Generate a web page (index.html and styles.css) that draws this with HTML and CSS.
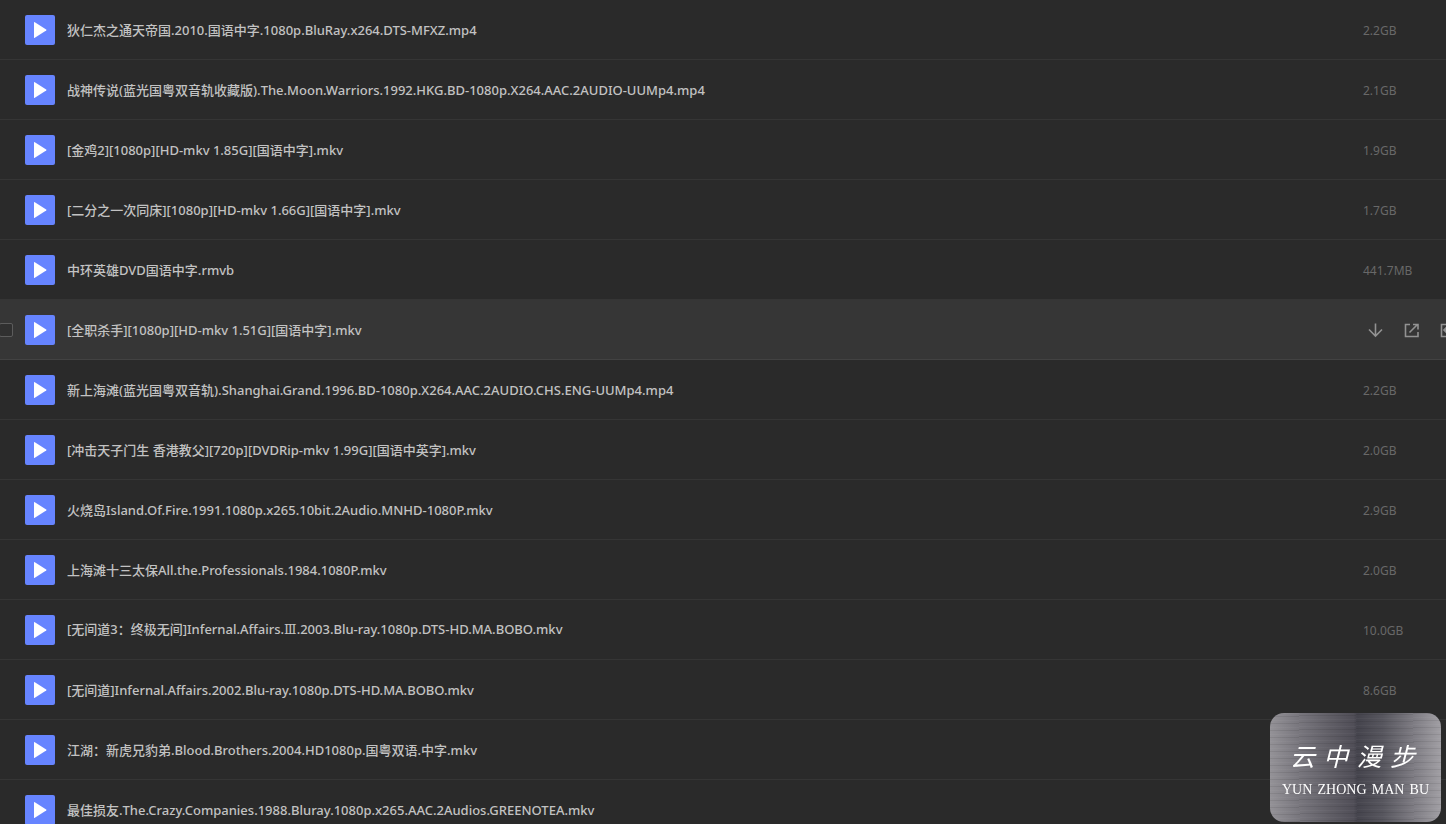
FILE: index.html
```
<!DOCTYPE html>
<html lang="zh-CN">
<head>
<meta charset="utf-8">
<title>云中漫步</title>
<link rel="stylesheet" href="styles.css">
</head>
<body>
<svg class="sprite" aria-hidden="true">
  <symbol id="play" viewBox="0 0 30 30"><path d="M9 7.600v14.800q0 .9.800.4l11.400-7.200q.6-.5 0-1L9.800 7.200q-.8-.5-.8.400z" fill="#fff"/></symbol>
</svg>
<main class="list">
  <ul class="rows">
    <li class="row"><svg class="thumb"><use href="#play"/></svg><span class="name">狄仁杰之通天帝国.2010.国语中字.1080p.BluRay.x264.DTS-MFXZ.mp4</span><span class="size">2.2GB</span></li>
    <li class="row"><svg class="thumb"><use href="#play"/></svg><span class="name">战神传说(蓝光国粤双音轨收藏版).The.Moon.Warriors.1992.HKG.BD-1080p.X264.AAC.2AUDIO-UUMp4.mp4</span><span class="size">2.1GB</span></li>
    <li class="row"><svg class="thumb"><use href="#play"/></svg><span class="name">[金鸡2][1080p][HD-mkv 1.85G][国语中字].mkv</span><span class="size">1.9GB</span></li>
    <li class="row"><svg class="thumb"><use href="#play"/></svg><span class="name">[二分之一次同床][1080p][HD-mkv 1.66G][国语中字].mkv</span><span class="size">1.7GB</span></li>
    <li class="row"><svg class="thumb"><use href="#play"/></svg><span class="name">中环英雄DVD国语中字.rmvb</span><span class="size">441.7MB</span></li>
    <li class="row row-active">
      <input class="check" type="checkbox" id="pick" aria-label="选择文件">
      <svg class="thumb"><use href="#play"/></svg>
      <label class="name" for="pick">[全职杀手][1080p][HD-mkv 1.51G][国语中字].mkv</label>
      <span class="actions">
        <button class="action" type="button" aria-label="下载"><svg class="glyph" viewBox="0 0 16 16"><path d="M7.500 1.500v12M1 7.500L7.500 14 14 7.500"/></svg></button>
        <button class="action" type="button" aria-label="分享"><svg class="glyph" viewBox="0 0 16 16"><path d="M6 2.500H1.500v12H14V10M5.500 10.500L13.500 2.500M9 2.500h5v5"/></svg></button>
        <button class="action" type="button" aria-label="移动"><svg class="glyph" viewBox="0 0 16 16"><path d="M8 2.500H1.500v12H14V9M4 8h7M7 5L4 8l3 3"/></svg></button>
      </span>
    </li>
    <li class="row"><svg class="thumb"><use href="#play"/></svg><span class="name">新上海滩(蓝光国粤双音轨).Shanghai.Grand.1996.BD-1080p.X264.AAC.2AUDIO.CHS.ENG-UUMp4.mp4</span><span class="size">2.2GB</span></li>
    <li class="row"><svg class="thumb"><use href="#play"/></svg><span class="name">[冲击天子门生 香港教父][720p][DVDRip-mkv 1.99G][国语中英字].mkv</span><span class="size">2.0GB</span></li>
    <li class="row"><svg class="thumb"><use href="#play"/></svg><span class="name">火烧岛Island.Of.Fire.1991.1080p.x265.10bit.2Audio.MNHD-1080P.mkv</span><span class="size">2.9GB</span></li>
    <li class="row"><svg class="thumb"><use href="#play"/></svg><span class="name">上海滩十三太保All.the.Professionals.1984.1080P.mkv</span><span class="size">2.0GB</span></li>
    <li class="row"><svg class="thumb"><use href="#play"/></svg><span class="name">[无间道3：终极无间]Infernal.Affairs.<span class="numeral">Ⅲ</span>.2003.Blu-ray.1080p.DTS-HD.MA.BOBO.mkv</span><span class="size">10.0GB</span></li>
    <li class="row"><svg class="thumb"><use href="#play"/></svg><span class="name">[无间道]Infernal.Affairs.2002.Blu-ray.1080p.DTS-HD.MA.BOBO.mkv</span><span class="size">8.6GB</span></li>
    <li class="row"><svg class="thumb"><use href="#play"/></svg><span class="name">江湖：新虎兄豹弟.Blood.Brothers.2004.HD1080p.国粤双语.中字.mkv</span></li>
    <li class="row"><svg class="thumb"><use href="#play"/></svg><span class="name">最佳损友.The.Crazy.Companies.1988.Bluray.1080p.x265.AAC.2Audios.GREENOTEA.mkv</span></li>
  </ul>
</main>
<aside class="badge">
  <span class="badge-title">云中漫步</span>
  <span class="badge-sub">YUN ZHONG MAN BU</span>
</aside>
</body>
</html>
```

FILE: styles.css
```
* { box-sizing: border-box; }
body {
  margin: 0;
  background: #2a2a2a;
  color: #c2c2c2;
  font: 13px/20px "Noto Sans", "Noto Sans CJK SC", sans-serif;
}
.sprite { display: none; }
.list { height: 100vh; overflow: hidden; }
.rows { margin: 0; padding: 0; list-style: none; }
.row {
  display: grid;
  grid-template-columns: 13px 30px minmax(0, 1fr) 83px;
  column-gap: 12px;
  align-items: center;
  height: 60px;
  border-bottom: 1px solid #353535;
}
.row-active {
  background: #363636;
  border-color: #424242;
}
.check {
  grid-column: 1;
  appearance: none;
  width: 14px;
  height: 14px;
  margin: 0 0 0 -1px;
  border: 1px solid #5c5c5c;
  border-radius: 2px;
  background: #303030;
}
.thumb {
  grid-column: 2;
  width: 30px;
  height: 30px;
  border-radius: 2px;
  background: #6684ff;
}
.name {
  font-weight: 500;
  overflow: hidden;
  white-space: nowrap;
  text-overflow: ellipsis;
}
.numeral { font-family: "DejaVu Serif", serif; font-weight: 400; }
.size {
  padding-top: 2px;
  color: #686868;
  font-size: 12px;
}
.actions {
  display: flex;
  gap: 20px;
  padding-left: 5px;
  overflow: hidden;
}
.action {
  flex: none;
  width: 16px;
  height: 16px;
  padding: 0;
  border: 0;
  background: none;
}
.glyph {
  display: block;
  width: 16px;
  height: 16px;
  fill: none;
  stroke: #929292;
  stroke-width: 1.6;
}
.badge {
  position: fixed;
  right: 5px;
  bottom: 2px;
  display: flex;
  flex-direction: column;
  gap: 8px;
  width: 171px;
  height: 109px;
  padding: 24px 12px 0;
  border-radius: 14px;
  color: #fff;
  background:
    repeating-linear-gradient(179deg, #ffffff08 0 1px, #0000 1px 3px, #00000014 3px 4px, #0000 4px 7px),
    linear-gradient(90deg, #949297 0%, #7a787f 16%, #5f5d65 36%, #504e57 49%, #45444d 51%, #57565e 66%, #7e7c83 84%, #a19fa4 100%);
}
.badge-title {
  padding: 0 14px 0 8px;
  font: italic 400 25px/36px "Noto Sans CJK SC", sans-serif;
  text-align-last: justify;
}
.badge-sub {
  font: 14px/18px "Liberation Serif", serif;
  text-align-last: justify;
  white-space: nowrap;
}
```
